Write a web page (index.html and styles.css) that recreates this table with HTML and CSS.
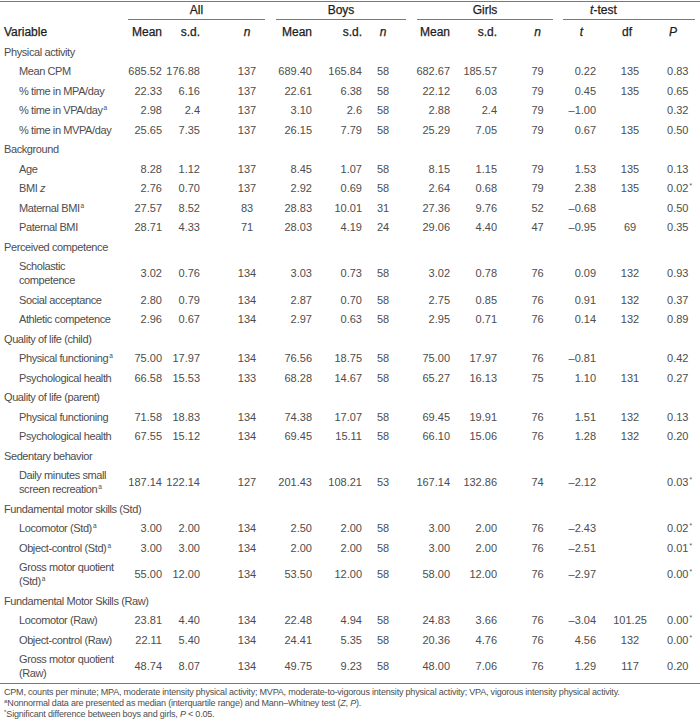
FILE: index.html
```html
<!DOCTYPE html>
<html lang="en">
<head>
<meta charset="utf-8">
<title>Table</title>
<link rel="stylesheet" href="styles.css">
</head>
<body>
<div class="table-wrap">
<table class="stats">
<colgroup>
<col class="w122"><col class="w42"><col class="w40"><col class="w62">
<col class="w50"><col class="w50"><col class="w34">
<col class="w54"><col class="w47"><col class="w59">
<col class="w40"><col class="w60"><col class="w40">
</colgroup>
<thead>
<tr class="groups">
<th></th>
<th colspan="3"><div class="grp grp-all">All</div></th>
<th colspan="3"><div class="grp grp-boys">Boys</div></th>
<th colspan="3"><div class="grp grp-girls">Girls</div></th>
<th colspan="3"><div class="grp grp-test"><i>t</i>-test</div></th>
</tr>
<tr class="heads">
<th>Variable</th>
<th>Mean</th><th>s.d.</th><th><i>n</i></th>
<th>Mean</th><th>s.d.</th><th><i>n</i></th>
<th>Mean</th><th>s.d.</th><th><i>n</i></th>
<th><i>t</i></th><th>df</th><th><i>P</i></th>
</tr>
</thead>
<tbody>
<tr class="section"><td colspan="13">Physical activity</td></tr>
<tr><td>Mean CPM</td><td>685.52</td><td>176.88</td><td>137</td><td>689.40</td><td>165.84</td><td>58</td><td>682.67</td><td>185.57</td><td>79</td><td>0.22</td><td>135</td><td>0.83</td></tr>
<tr><td>% time in MPA/day</td><td>22.33</td><td>6.16</td><td>137</td><td>22.61</td><td>6.38</td><td>58</td><td>22.12</td><td>6.03</td><td>79</td><td>0.45</td><td>135</td><td>0.65</td></tr>
<tr><td>% time in VPA/day<sup>a</sup></td><td>2.98</td><td>2.4</td><td>137</td><td>3.10</td><td>2.6</td><td>58</td><td>2.88</td><td>2.4</td><td>79</td><td>–1.00</td><td></td><td>0.32</td></tr>
<tr><td>% time in MVPA/day</td><td>25.65</td><td>7.35</td><td>137</td><td>26.15</td><td>7.79</td><td>58</td><td>25.29</td><td>7.05</td><td>79</td><td>0.67</td><td>135</td><td>0.50</td></tr>
<tr class="section"><td colspan="13">Background</td></tr>
<tr><td>Age</td><td>8.28</td><td>1.12</td><td>137</td><td>8.45</td><td>1.07</td><td>58</td><td>8.15</td><td>1.15</td><td>79</td><td>1.53</td><td>135</td><td>0.13</td></tr>
<tr><td>BMI <i>z</i></td><td>2.76</td><td>0.70</td><td>137</td><td>2.92</td><td>0.69</td><td>58</td><td>2.64</td><td>0.68</td><td>79</td><td>2.38</td><td>135</td><td>0.02<sup>*</sup></td></tr>
<tr><td>Maternal BMI<sup>a</sup></td><td>27.57</td><td>8.52</td><td>83</td><td>28.83</td><td>10.01</td><td>31</td><td>27.36</td><td>9.76</td><td>52</td><td>–0.68</td><td></td><td>0.50</td></tr>
<tr><td>Paternal BMI</td><td>28.71</td><td>4.33</td><td>71</td><td>28.03</td><td>4.19</td><td>24</td><td>29.06</td><td>4.40</td><td>47</td><td>–0.95</td><td>69</td><td>0.35</td></tr>
<tr class="section"><td colspan="13">Perceived competence</td></tr>
<tr><td>Scholastic<br>competence</td><td>3.02</td><td>0.76</td><td>134</td><td>3.03</td><td>0.73</td><td>58</td><td>3.02</td><td>0.78</td><td>76</td><td>0.09</td><td>132</td><td>0.93</td></tr>
<tr><td>Social acceptance</td><td>2.80</td><td>0.79</td><td>134</td><td>2.87</td><td>0.70</td><td>58</td><td>2.75</td><td>0.85</td><td>76</td><td>0.91</td><td>132</td><td>0.37</td></tr>
<tr><td>Athletic competence</td><td>2.96</td><td>0.67</td><td>134</td><td>2.97</td><td>0.63</td><td>58</td><td>2.95</td><td>0.71</td><td>76</td><td>0.14</td><td>132</td><td>0.89</td></tr>
<tr class="section"><td colspan="13">Quality of life (child)</td></tr>
<tr><td>Physical functioning<sup>a</sup></td><td>75.00</td><td>17.97</td><td>134</td><td>76.56</td><td>18.75</td><td>58</td><td>75.00</td><td>17.97</td><td>76</td><td>–0.81</td><td></td><td>0.42</td></tr>
<tr><td>Psychological health</td><td>66.58</td><td>15.53</td><td>133</td><td>68.28</td><td>14.67</td><td>58</td><td>65.27</td><td>16.13</td><td>75</td><td>1.10</td><td>131</td><td>0.27</td></tr>
<tr class="section"><td colspan="13">Quality of life (parent)</td></tr>
<tr><td>Physical functioning</td><td>71.58</td><td>18.83</td><td>134</td><td>74.38</td><td>17.07</td><td>58</td><td>69.45</td><td>19.91</td><td>76</td><td>1.51</td><td>132</td><td>0.13</td></tr>
<tr><td>Psychological health</td><td>67.55</td><td>15.12</td><td>134</td><td>69.45</td><td>15.11</td><td>58</td><td>66.10</td><td>15.06</td><td>76</td><td>1.28</td><td>132</td><td>0.20</td></tr>
<tr class="section"><td colspan="13">Sedentary behavior</td></tr>
<tr><td>Daily minutes small<br>screen recreation<sup>a</sup></td><td>187.14</td><td>122.14</td><td>127</td><td>201.43</td><td>108.21</td><td>53</td><td>167.14</td><td>132.86</td><td>74</td><td>–2.12</td><td></td><td>0.03<sup>*</sup></td></tr>
<tr class="section"><td colspan="13">Fundamental motor skills (Std)</td></tr>
<tr><td>Locomotor (Std)<sup>a</sup></td><td>3.00</td><td>2.00</td><td>134</td><td>2.50</td><td>2.00</td><td>58</td><td>3.00</td><td>2.00</td><td>76</td><td>–2.43</td><td></td><td>0.02<sup>*</sup></td></tr>
<tr><td>Object-control (Std)<sup>a</sup></td><td>3.00</td><td>3.00</td><td>134</td><td>2.00</td><td>2.00</td><td>58</td><td>3.00</td><td>2.00</td><td>76</td><td>–2.51</td><td></td><td>0.01<sup>*</sup></td></tr>
<tr><td>Gross motor quotient<br>(Std)<sup>a</sup></td><td>55.00</td><td>12.00</td><td>134</td><td>53.50</td><td>12.00</td><td>58</td><td>58.00</td><td>12.00</td><td>76</td><td>–2.97</td><td></td><td>0.00<sup>*</sup></td></tr>
<tr class="section"><td colspan="13">Fundamental Motor Skills (Raw)</td></tr>
<tr><td>Locomotor (Raw)</td><td>23.81</td><td>4.40</td><td>134</td><td>22.48</td><td>4.94</td><td>58</td><td>24.83</td><td>3.66</td><td>76</td><td>–3.04</td><td>101.25</td><td>0.00<sup>*</sup></td></tr>
<tr><td>Object-control (Raw)</td><td>22.11</td><td>5.40</td><td>134</td><td>24.41</td><td>5.35</td><td>58</td><td>20.36</td><td>4.76</td><td>76</td><td>4.56</td><td>132</td><td>0.00<sup>*</sup></td></tr>
<tr><td>Gross motor quotient<br>(Raw)</td><td>48.74</td><td>8.07</td><td>134</td><td>49.75</td><td>9.23</td><td>58</td><td>48.00</td><td>7.06</td><td>76</td><td>1.29</td><td>117</td><td>0.20</td></tr>
</tbody>
</table>
</div>
<div class="notes">
<p>CPM, counts per minute; MPA, moderate intensity physical activity; MVPA, moderate-to-vigorous intensity physical activity; VPA, vigorous intensity physical activity.</p>
<p><sup>a</sup>Nonnormal data are presented as median (interquartile range) and Mann–Whitney test (<i>Z</i>, <i>P</i>).</p>
<p><sup>*</sup>Significant difference between boys and girls, <i>P</i> &lt; 0.05.</p>
</div>
</body>
</html>
```
FILE: styles.css
```css
html, body {
  margin: 0;
  padding: 0;
  background: #ffffff;
}

body {
  font-family: "Liberation Sans", Arial, Helvetica, sans-serif;
  color: #4d4d4d;
}

.table-wrap {
  width: 700px;
  margin-top: 1px;
  border-top: 1px solid #3a8dba;
  border-bottom: 1px solid #3a8dba;
}

.stats {
  width: 700px;
  border-collapse: collapse;
  table-layout: fixed;
  font-size: 11px;
  line-height: 14px;
}

.w122 { width: 122px; }
.w42 { width: 42px; }
.w40 { width: 40px; }
.w62 { width: 62px; }
.w50 { width: 50px; }
.w34 { width: 34px; }
.w54 { width: 54px; }
.w47 { width: 47px; }
.w59 { width: 59px; }
.w60 { width: 60px; }

.stats th,
.stats td {
  padding: 2.75px 0;
  font-weight: normal;
  white-space: nowrap;
}

.stats sup {
  font-size: 6.5px;
  line-height: 0;
  vertical-align: 4px;
  margin-left: 1px;
  letter-spacing: 0;
}

/* header rows */
.groups th,
.heads th {
  font-size: 12px;
  color: #1c1c1c;
  -webkit-text-stroke: 0.25px #1c1c1c;
}

.groups th {
  padding: 0;
}

.grp {
  text-align: center;
  line-height: 14px;
  padding-top: 1px;
  padding-bottom: 2px;
  border-bottom: 1px solid #3a8dba;
}

.grp-all { margin: 0 1px 0 6px; }
.grp-boys { margin: 0 -6px 0 10px; }
.grp-girls { margin: 0 7px 0 17px; }
.grp-test { margin: 0 5px 0 3px; text-align: left; padding-left: 27px; }

.heads th {
  line-height: 14px;
  padding-top: 5px;
  padding-bottom: 3px;
}

.heads th:nth-child(1) { text-align: left; padding-left: 4px; }
.heads th:nth-child(11) { text-align: right; padding-right: 17px; }
.heads th:nth-child(12) { text-align: center; padding-right: 6px; }
.heads th:nth-child(13) { text-align: left; padding-left: 9px; }

/* labels */
.stats td:nth-child(1) {
  text-align: left;
  padding-left: 19px;
  letter-spacing: -0.4px;
}

.section td:nth-child(1) {
  padding-left: 4px;
}

/* numeric columns */
.stats tr > :nth-child(2) { text-align: right; padding-right: 2px; }
.stats tr > :nth-child(3) { text-align: right; padding-right: 4px; }
.stats tr > :nth-child(4) { text-align: center; padding-left: 24px; }
.stats tr > :nth-child(5) { text-align: right; padding-right: 4px; }
.stats tr > :nth-child(6) { text-align: right; padding-right: 4px; }
.stats tr > :nth-child(7) { text-align: center; }
.stats tr > :nth-child(8) { text-align: right; padding-right: 4px; }
.stats tr > :nth-child(9) { text-align: right; padding-right: 4px; }
.stats tr > :nth-child(10) { text-align: center; padding-left: 14px; }
.stats td:nth-child(11) { text-align: right; padding-right: 4px; }
.stats td:nth-child(12) { text-align: center; }
.stats td:nth-child(13) { text-align: left; padding-left: 7px; }

.groups th:nth-child(n) { text-align: center; padding-left: 0; padding-right: 0; }

/* footnotes */
.notes {
  padding: 3px 0 0 4px;
  font-size: 9px;
  line-height: 11px;
  letter-spacing: -0.2px;
  color: #4d4d4d;
}

.notes p {
  margin: 0;
}

.notes sup {
  font-size: 6px;
  line-height: 0;
  vertical-align: 3px;
  letter-spacing: 0;
}
```
